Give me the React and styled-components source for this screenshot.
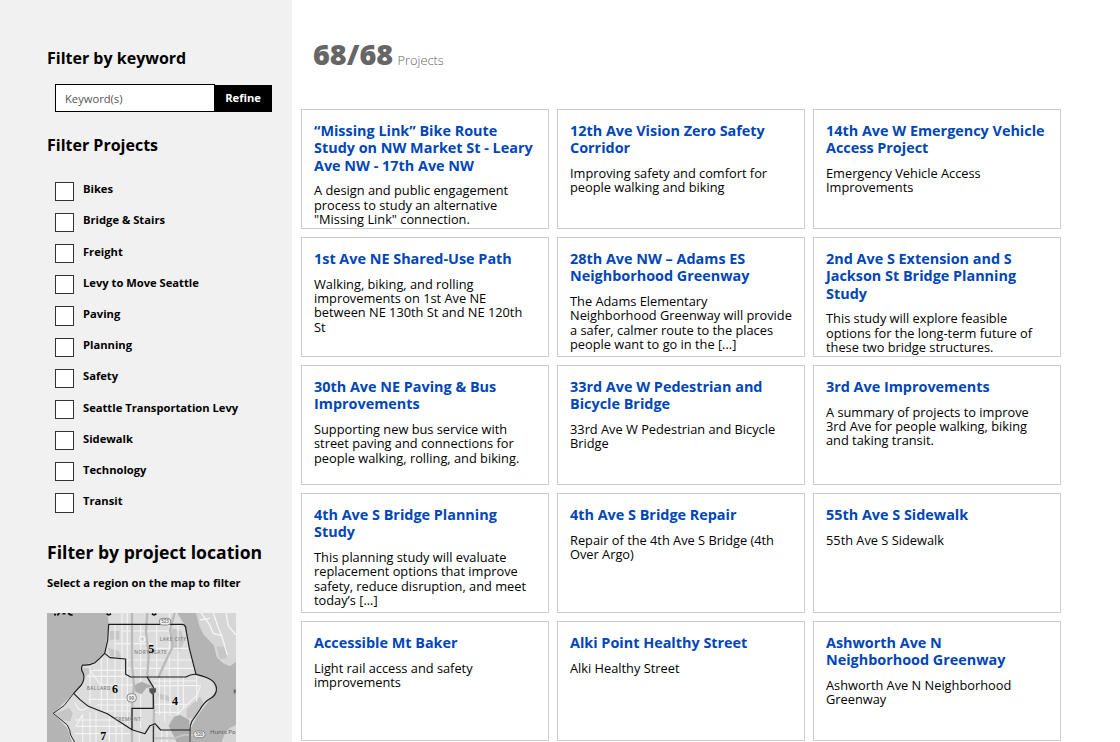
import { useState } from 'react';
import styled, { createGlobalStyle } from 'styled-components';

const GlobalStyle = createGlobalStyle`
* {
  box-sizing: border-box;
}

body {
  margin: 0;
  background-color: #fff;
  color: #000;
  font-family: 'Open Sans', sans-serif;
}

h2, h3, p, ul {
  margin: 0;
  padding: 0;
}
`;

const Page = styled.div`
display: flex;
height: 742px;
overflow: hidden;
`;

const Sidebar = styled.aside`
flex: 0 0 292px;
padding: 46px 20px 0 47px;
background-color: #f1f1f1;
`;

const FilterTitle = styled.h2`
font-size: ${({ $large }) => ($large ? '17.6px' : '16px')};
font-weight: 700;
line-height: 24px;
white-space: nowrap;
`;

const SearchForm = styled.form`
display: flex;
align-items: flex-end;
margin: 14px 0 21px 8px;

input {
  width: 160px;
  height: 28px;
  padding: 1px 9px;
  border: 1px solid #000;
  border-radius: 0;
  background-color: #fff;
  font-family: inherit;
  font-size: 11.2px;
}

input::placeholder {
  color: #555;
}

button {
  width: 57px;
  height: 27px;
  padding: 0 1px 2px 0;
  border: 0;
  background-color: #000;
  color: #fff;
  font-family: inherit;
  font-size: 11.2px;
  font-weight: 700;
}
`;

const FilterList = styled.ul`
margin: 24.6px 0 15.4px 8px;
list-style: none;
`;

const FilterItem = styled.li`
height: 31.2px;

label {
  display: flex;
  font-size: 11.2px;
  font-weight: 700;
  line-height: 15px;
}

span {
  margin-top: -0.3px;
}

input {
  appearance: none;
  width: 19.2px;
  height: 19.2px;
  margin: 0 8.8px 0 0;
  border: 1px solid #333;
  background-color: #fff;
}

input:checked {
  background-color: #333;
}
`;

const MapHint = styled.p`
margin: 11px 0 22.8px;
font-size: 11.2px;
font-weight: 700;
line-height: 15px;
`;

const MapImage = styled.svg`
display: block;

.label {
  font-family: 'Open Sans', sans-serif;
  font-size: 14px;
  font-weight: 600;
  fill: #808080;
  letter-spacing: 1.6px;
}

.region {
  font-family: 'Liberation Serif', serif;
  font-weight: 700;
  font-size: 36px;
}
`;

const Results = styled.main`
flex: 1;
padding: 34px 0 0 9px;
`;

const Count = styled.p`
height: 75px;
padding-left: 12px;
color: #666;
font-size: 12.8px;
font-weight: 300;
line-height: 40px;

strong {
  margin-right: 1px;
  font-size: 28.8px;
  font-weight: 800;
}
`;

const CardGrid = styled.div`
display: grid;
grid-template-columns: repeat(3, 248px);
grid-auto-rows: 120px;
gap: 8px;
`;

const Card = styled.article`
overflow: hidden;
padding: 12px;
border: 1px solid #ccc;

h3 {
  margin-bottom: 9.4px;
  color: #0046b8;
  font-size: 14.4px;
  font-weight: 700;
  line-height: 17.28px;
}

p {
  font-size: 12.8px;
  line-height: 14.4px;
}
`;

const filters = [
  'Bikes',
  'Bridge & Stairs',
  'Freight',
  'Levy to Move Seattle',
  'Paving',
  'Planning',
  'Safety',
  'Seattle Transportation Levy',
  'Sidewalk',
  'Technology',
  'Transit',
];

const projects = [
  ['“Missing Link” Bike Route Study on NW Market St - Leary Ave NW - 17th Ave NW', 'A design and public engagement process to study an alternative "Missing Link" connection.'],
  ['12th Ave Vision Zero Safety Corridor', 'Improving safety and comfort for people walking and biking'],
  ['14th Ave W Emergency Vehicle Access Project', 'Emergency Vehicle Access Improvements'],
  ['1st Ave NE Shared-Use Path', 'Walking, biking, and rolling improvements on 1st Ave NE between NE 130th St and NE 120th St'],
  ['28th Ave NW – Adams ES Neighborhood Greenway', 'The Adams Elementary Neighborhood Greenway will provide a safer, calmer route to the places people want to go in the [...]'],
  ['2nd Ave S Extension and S Jackson St Bridge Planning Study', 'This study will explore feasible options for the long-term future of these two bridge structures.'],
  ['30th Ave NE Paving & Bus Improvements', 'Supporting new bus service with street paving and connections for people walking, rolling, and biking.'],
  ['33rd Ave W Pedestrian and Bicycle Bridge', '33rd Ave W Pedestrian and Bicycle Bridge'],
  ['3rd Ave Improvements', 'A summary of projects to improve 3rd Ave for people walking, biking and taking transit.'],
  ['4th Ave S Bridge Planning Study', 'This planning study will evaluate replacement options that improve safety, reduce disruption, and meet today’s [...]'],
  ['4th Ave S Bridge Repair', 'Repair of the 4th Ave S Bridge (4th Over Argo)'],
  ['55th Ave S Sidewalk', '55th Ave S Sidewalk'],
  ['Accessible Mt Baker', 'Light rail access and safety improvements'],
  ['Alki Point Healthy Street', 'Alki Healthy Street'],
  ['Ashworth Ave N Neighborhood Greenway', 'Ashworth Ave N Neighborhood Greenway'],
];

const RegionMap = () => (
  <MapImage width="189" height="129" viewBox="21 24 567 387">
    <rect x="21" y="24" width="567" height="387" fill="#b4b4b4" />
    {/* land */}
    <path d="M203 24 H412 L432 58 L448 130 L468 208 L515 222 L529 255 L505 290 L470 335 L450 375 L452 411 H96 L82 370 L40 325 L101 265 L132 230 L126 180 L165 172 L194 145 L206 58Z" fill="#dcdcdc" />
    <path d="M468 24 H588 V170 L570 184 L548 174 L530 156 L522 122 L490 88 L478 62Z" fill="#d6d6d6" />
    <path d="M545 411 L555 385 L570 368 L588 360 V411Z" fill="#d4d4d4" />
    {/* parks and lakes */}
    <path d="M210 78 H238 V104 H210Z M204 128 L236 138 L245 158 L212 154Z M395 70 L425 78 L432 110 L418 140 L395 120Z M128 188 L160 192 L146 208 L130 216Z M350 265 L386 272 L388 289 L360 282Z M440 312 L480 275 L492 295 L460 340 L440 340Z M46 325 L88 308 L98 325 L90 350 L66 345Z M530 125 H560 V160 L540 162Z" fill="#c6c6c6" />
    {/* streets */}
    <path d="M484 24 L508 58 L520 85 L545 92 L562 150 M520 24 L535 68 L545 92 M558 24 L565 62 L588 90 M480 45 L510 40" fill="none" stroke="#f5f5f5" strokeWidth="4" />
    <path d="M225 58 V160 M246 24 V160 M262 24 V214 M302 58 V214 M350 58 V214 M388 24 V214 M414 58 V214 M246 78 H390 M225 116 H340 M350 130 H444 M256 165 H455 M256 190 H462" fill="none" stroke="#f3f3f3" strokeWidth="3.4" />
    <path d="M150 186 V296 M184 160 V315 M202 160 V322 M225 160 V334 M246 160 V346 M262 214 V360 M302 216 V370 M150 196 H256 M142 214 H256 M182 240 H338 M145 283 H276 M170 300 H276 M190 318 H276 M150 196 L182 240" fill="none" stroke="#f3f3f3" strokeWidth="3.4" />
    <path d="M358 214 V330 M374 216 V350 M390 214 V332 M414 216 V330 M430 212 V312 M470 210 V290 M342 242 H482 M342 228 H470 M342 298 H440 M342 322 H420 M482 240 L472 270 L440 300 L410 330" fill="none" stroke="#f3f3f3" strokeWidth="3.4" />
    <path d="M128 328 V411 M150 322 V411 M168 320 V411 M208 334 V411 M228 346 V411 M246 358 V411 M298 384 V411 M365 378 V411 M381 378 V411 M105 345 H225 M108 364 H250 M105 386 H270 M105 292 Q118 330 145 306 M108 364 L128 328" fill="none" stroke="#f3f3f3" strokeWidth="3.4" />
    <path d="M284 240 L305 230 L338 244 L318 250 L305 268 L286 260Z M386 362 L402 335 L420 330 L448 345 V411 H410Z" fill="#adadad" />
    {/* highways */}
    <path d="M276 24 V180 L282 240 L276 310 V411 M322 24 L318 80 L326 150 L322 210 L338 252 L342 320 L340 411 M404 24 L390 75 L398 125 L374 175 L355 218" fill="none" stroke="#bababa" strokeWidth="7" />
    <path d="M338 400 H400 L430 390 H470" fill="none" stroke="#c4c4c4" strokeWidth="6" />
    {/* region outlines */}
    <g fill="none" stroke="#1a1a1a" strokeWidth="3.4" strokeLinejoin="round">
      <path d="M206 58 H428 Q438 60 438 74 L448 130 L468 208 Q452 207 438 216 H272 L257 208 V162 L210 158 L194 145 L203 106Z" />
      <path d="M194 145 Q180 160 165 173 Q145 182 128 180 Q120 190 130 206 Q136 220 124 240 L101 265 L120 284 L145 304 L202 326 L276 374 V310 H340 V246 L321 216" />
      <path d="M468 208 Q505 216 519 229 Q532 242 529 258 Q525 273 512 280 Q493 290 479 315 Q466 334 456 348 Q449 362 450 375 H362 L345 356 L330 362 L315 386 L276 374" />
      <path d="M101 265 L72 302 L40 325 L82 360 Q91 376 92 390 L104 411 M340 362 V411 M450 375 V411" strokeWidth="2.8" />
    </g>
    <circle cx="307" cy="102" r="8" fill="#d4d4d4" stroke="#f5f5f5" strokeWidth="4" />
    <path d="M328 250 H348 V260 L338 270 L328 260Z" fill="#555" />
    <g fill="#efefef" stroke="#888" strokeWidth="3">
      <rect x="358" y="40" width="34" height="20" rx="9" />
      <rect x="261" y="266" width="28" height="25" rx="11" />
      <rect x="461" y="378" width="34" height="20" rx="9" />
    </g>
    <g fontFamily="Open Sans, sans-serif" fontSize="13" fontWeight="600" fill="#666">
      <text x="364" y="55">523</text>
      <text x="267" y="284">99</text>
      <text x="467" y="393">520</text>
    </g>
    <text className="label" x="359" y="108">LAKE CITY</text>
    <text className="label" x="283" y="147">NORTHGATE</text>
    <text className="label" x="140" y="256">BALLARD</text>
    <text className="label" x="226" y="347">FREMONT</text>
    <text x="510" y="388" fontFamily="Open Sans, sans-serif" fontSize="18" fill="#555">Hunts Po</text>
    <text x="580" y="267" fontFamily="Open Sans, sans-serif" fontSize="20" fill="#333">K</text>
    <text className="region" x="325" y="143">5</text>
    <text className="region" x="216" y="263">6</text>
    <text className="region" x="396" y="300">4</text>
    <text className="region" x="181" y="406">7</text>
    {/* lower edge of the cut-off caption above the map */}
    <g fill="none" stroke="#111" strokeWidth="5">
      <path d="M42 29 H48 M58 24 L52 31 M68 26 H76 M86 24 Q87 30 98 30 M200 26 Q206 33 213 26 M336 26 Q342 33 349 26" />
    </g>
  </MapImage>
);

const App = () => {
  const [keyword, setKeyword] = useState('');

  return (
    <Page>
      <GlobalStyle />
      <Sidebar>
        <FilterTitle>Filter by keyword</FilterTitle>
        <SearchForm onSubmit={(e) => e.preventDefault()}>
          <input type="text" placeholder="Keyword(s)" value={keyword} onChange={(e) => setKeyword(e.target.value)} />
          <button type="submit">Refine</button>
        </SearchForm>
        <FilterTitle>Filter Projects</FilterTitle>
        <FilterList>
          {filters.map((name) => (
            <FilterItem key={name}>
              <label>
                <input type="checkbox" />
                <span>{name}</span>
              </label>
            </FilterItem>
          ))}
        </FilterList>
        <FilterTitle $large>Filter by project location</FilterTitle>
        <MapHint>Select a region on the map to filter</MapHint>
        <RegionMap />
      </Sidebar>
      <Results>
        <Count><strong>68/68</strong> Projects</Count>
        <CardGrid>
          {projects.map(([title, text]) => (
            <Card key={title}>
              <h3>{title}</h3>
              <p>{text}</p>
            </Card>
          ))}
        </CardGrid>
      </Results>
    </Page>
  );
};

export default App;
